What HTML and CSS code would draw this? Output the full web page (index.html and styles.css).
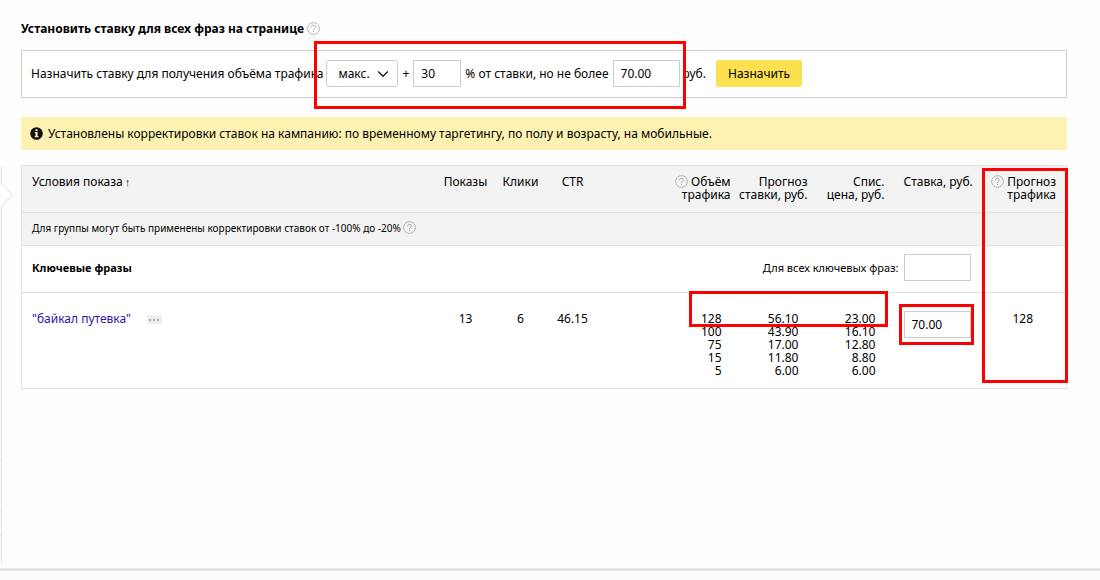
FILE: index.html
```html
<!DOCTYPE html>
<html lang="ru">
<head>
<meta charset="utf-8">
<title>Установить ставку для всех фраз на странице</title>
<link rel="stylesheet" href="styles.css">
</head>
<body>
<svg class="sprite" width="0" height="0" aria-hidden="true">
  <symbol id="help" viewBox="0 0 13 13">
    <circle cx="6.5" cy="6.5" r="5.9" fill="none" stroke="#b4b4b4"/>
    <path d="M4.6 5.2c0-1.3.8-2 1.9-2s1.9.7 1.9 1.7c0 1.5-1.9 1.5-1.9 3" fill="none" stroke="#a6a6a6"/>
    <path d="M6.5 8.9v1.2" stroke="#a6a6a6"/>
  </symbol>
</svg>
<div class="page">
  <div class="body">
    <aside class="rail">
      <svg class="rail-arrow" width="14" height="26" viewBox="0 0 14 26" aria-hidden="true">
        <path d="M1.5 1.5L13 12.5L1.5 23.5" fill="#fff" stroke="#ddd"/>
        <path d="M1.5 2v21" stroke="#fff"/>
      </svg>
      <div class="rail-items"><i></i><i></i><i></i><i></i></div>
    </aside>
    <main class="content">
      <h1 class="title">Установить ставку для всех фраз на странице
        <svg class="help" role="img" aria-label="Справка"><use href="#help"/></svg>
      </h1>
      <form class="bid-form">
        <label for="position">Назначить ставку для получения объёма трафика</label>
        <div class="bid-group">
          <span class="select-wrap">
            <select id="position" class="select"><option>макс.</option></select>
            <svg class="chevron" width="12" height="8" viewBox="0 0 12 8" aria-hidden="true"><path d="M1.2 1.5L6 6.2L10.8 1.5" fill="none" stroke="#222" stroke-width="1.5"/></svg>
          </span>
          <span>+</span>
          <input class="field field-percent" type="text" value="30" aria-label="Процент">
          <label for="limit">% от ставки, но не более</label>
          <input id="limit" class="field" type="text" value="70.00">
          <span class="mark mark-form"></span>
        </div>
        <span>руб.</span>
        <button class="submit" type="button">Назначить</button>
      </form>
      <div class="notice">
        <svg width="13" height="13" viewBox="0 0 13 13" aria-hidden="true">
          <circle cx="6.5" cy="6.5" r="6.3" fill="#111"/>
          <path d="M5.5 2.2h2v1.9h-2zM4.8 5.1h2.8v4h.8v1.2H4.7V9.1h.8V6.3h-.7z" fill="#fdf2b2"/>
        </svg>
        <span>Установлены корректировки ставок на кампанию: по временному таргетингу, по полу и возрасту, на мобильные.</span>
      </div>
      <div class="table-wrap">
        <table class="phrases">
          <colgroup>
            <col><col class="c-shows"><col class="c-clicks"><col class="c-ctr"><col class="c-volume"><col class="c-price"><col class="c-price"><col class="c-bid"><col class="c-forecast">
          </colgroup>
          <thead>
            <tr class="head">
              <th class="first">Условия показа<span class="sort">↑</span></th>
              <th class="center">Показы</th>
              <th class="center">Клики</th>
              <th class="center">CTR</th>
              <th class="right"><svg class="help" role="img" aria-label="Справка"><use href="#help"/></svg> Объём<br>трафика</th>
              <th class="right">Прогноз<br>ставки, руб.</th>
              <th class="right">Спис.<br>цена, руб.</th>
              <th class="bid">Ставка, руб.</th>
              <th class="forecast"><svg class="help" role="img" aria-label="Справка"><use href="#help"/></svg> Прогноз<br>трафика</th>
            </tr>
          </thead>
          <tbody>
            <tr class="info">
              <td class="first" colspan="9">Для группы могут быть применены корректировки ставок от -100% до -20%
                <svg class="help" role="img" aria-label="Справка"><use href="#help"/></svg></td>
            </tr>
            <tr class="group">
              <th class="first" colspan="4">Ключевые фразы</th>
              <td class="all-label" colspan="3"><label for="all-bid">Для всех ключевых фраз:</label></td>
              <td class="bid"><input id="all-bid" class="field" type="text"></td>
              <td></td>
            </tr>
            <tr class="data">
              <td class="first"><a class="phrase" href="#">"байкал путевка"</a><button class="more" type="button" aria-label="Ещё"><i></i><i></i><i></i></button></td>
              <td class="center">13</td>
              <td class="center">6</td>
              <td class="center">46.15</td>
              <td class="nums">128<br>100<br>75<br>15<br>5</td>
              <td class="nums">56.10<br>43.90<br>17.00<br>11.80<br>6.00</td>
              <td class="nums">23.00<br>16.10<br>12.80<br>8.80<br>6.00</td>
              <td class="bid"><input class="field" type="text" value="70.00" aria-label="Ставка, руб."></td>
              <td class="result">128</td>
            </tr>
          </tbody>
        </table>
        <span class="mark mark-top"></span>
        <span class="mark mark-bid"></span>
        <span class="mark mark-forecast"></span>
      </div>
    </main>
  </div>
  <footer class="footer"></footer>
</div>
</body>
</html>
```
FILE: styles.css
```css
* { box-sizing: border-box; }
body {
  margin: 0;
  background: #fefefe;
  color: #000;
  font: 12px/14px "Noto Sans", "Open Sans", sans-serif;
}
input, select, button { font: inherit; color: inherit; margin: 0; }
.sprite { position: absolute; }
.page { min-height: 100vh; display: flex; flex-direction: column; }
.body { flex: 1; display: flex; }

.rail {
  flex: none;
  width: 2px;
  margin: 166px 19px 4px 0;
  border-right: 1px solid #e2e2e2;
  position: relative;
  display: flex;
  flex-direction: column;
  justify-content: flex-end;
}
.rail-arrow { position: absolute; left: 0; top: 16px; }
.rail-items { display: flex; flex-direction: column; gap: 24px; padding-bottom: 28px; }
.rail-items i { height: 1px; background: #ddd; }

.content { flex: 1; min-width: 0; padding: 22px 33px 0 0; }
.title { margin: 0; font-size: 12px; line-height: 14px; }
.help { width: 13px; height: 13px; vertical-align: -2px; }

.bid-form {
  display: flex;
  align-items: center;
  gap: 3px;
  height: 48px;
  margin-top: 14px;
  padding: 0 9px 1px;
  border: 1px solid #ccc;
  background: #fff;
  white-space: nowrap;
}
.bid-group { display: flex; align-items: center; gap: 4px; position: relative; }
.select-wrap { position: relative; display: flex; }
.select {
  appearance: none;
  width: 72px;
  height: 27px;
  padding: 0 11px;
  border: 1px solid #ccc;
  border-radius: 3px;
  background: #fff;
}
.chevron { position: absolute; right: 9px; top: 10px; pointer-events: none; }
.field {
  display: block;
  width: 67px;
  height: 27px;
  padding: 0 7px;
  border: 1px solid #ccc;
  border-radius: 0;
  background: #fff;
}
.field-percent { width: 48px; }
.submit {
  height: 27px;
  margin-left: 7px;
  padding: 0 12px;
  border: 0;
  border-radius: 3px;
  background: #fbe04f;
}

.notice {
  display: flex;
  align-items: center;
  gap: 5px;
  margin-top: 19px;
  padding: 10px 9px;
  background: #fdf2b2;
}
.notice span { line-height: 13px; }

.table-wrap { position: relative; margin-top: 15px; }
.phrases {
  width: 100%;
  table-layout: fixed;
  border-collapse: collapse;
  border: 1px solid #e2e2e2;
  background: #fff;
}
.c-shows { width: 60px; }
.c-clicks { width: 50px; }
.c-ctr { width: 54px; }
.c-volume { width: 135px; }
.c-price { width: 77px; }
.c-bid { width: 95px; }
.c-forecast { width: 83px; }
.phrases th, .phrases td {
  padding: 0;
  border-bottom: 1px solid #e2e2e2;
  font-weight: normal;
  line-height: 13px;
  text-align: left;
  vertical-align: top;
}
.phrases .first { padding-left: 10px; }
.phrases .center { text-align: center; }
.phrases .right { text-align: right; padding-right: 4px; }
.phrases .bid { padding-left: 15px; }
.phrases .forecast { text-align: right; padding-right: 10px; }
.phrases .nums { text-align: right; padding-right: 13px; }
.phrases .result { padding-left: 29px; }
.head, .info { background: #f3f3f3; }
.phrases .head th { height: 47px; padding-top: 9px; }
.sort { margin-left: 2px; font-size: 11px; color: #225; }
.phrases .info td { height: 33px; padding-bottom: 2px; font-size: 10px; vertical-align: middle; }
.phrases .group th, .phrases .group td { height: 47px; padding-bottom: 3px; font-size: 11px; vertical-align: middle; }
.phrases .group th { font-weight: bold; }
.phrases .group td.all-label { text-align: right; }
.phrases .group td.all-label label { margin-right: -10px; }
.phrases .data td { height: 96px; padding-top: 19px; }
.phrases .data .bid { padding-top: 18px; }
.phrase { color: #31a; text-decoration: none; }
.more {
  display: inline-flex;
  justify-content: center;
  align-items: center;
  gap: 2px;
  width: 15px;
  height: 9px;
  margin-left: 16px;
  padding: 2px 0 0;
  border: 0;
  background: #eee;
  vertical-align: 2px;
}
.more i { width: 2px; height: 2px; background: #aaa; }

.mark { position: absolute; border: 3px solid #f00; pointer-events: none; }
.mark-form { inset: -19px -6px -22px -12px; }
.mark-top { right: 179px; top: 126px; width: 199px; height: 36px; }
.mark-bid { right: 93px; top: 139px; width: 75px; height: 41px; }
.mark-forecast { right: -1px; top: 3px; bottom: 6px; width: 86px; }

.footer { height: 12px; border-top: 3px solid #e2e2e2; background: #fcfcfc; }
```
